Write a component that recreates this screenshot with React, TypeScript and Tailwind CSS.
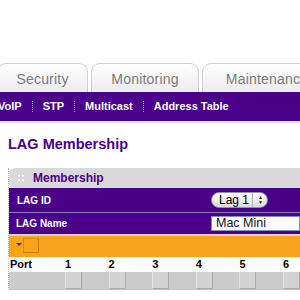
export default function App() {
  const ports = ["1", "2", "3", "4", "5", "6"];
  return (
    <div
      className="w-[300px] h-[300px] overflow-hidden bg-white"
      style={{ fontFamily: '"Liberation Sans", Arial, sans-serif' }}
    >
      {/* Tabs */}
      <div className="h-[63px]" />
      <div className="flex gap-[3px] ml-[-3px] h-[29px] items-end">
        {[
          ["Security", "w-[91px]"],
          ["Monitoring", "w-[108px]"],
          ["Maintenance", "w-[130px]"],
        ].map(([t, w]) => (
          <div
            key={t}
            className={`${w} h-[29px] shrink-0 rounded-t-[9px] border border-b-0 border-[#cfcfcf] bg-gradient-to-b from-white to-[#ececec] flex items-center justify-center text-[14px] text-[#7a7a7a] tracking-[0.2px]`}
          >
            <span className="mt-[2px]">{t}</span>
          </div>
        ))}
      </div>

      {/* Sub nav */}
      <div className="h-[29px] bg-[#4a0088] flex items-center gap-[10px] pl-[0px] text-white text-[11px] font-bold">
        <span className="ml-[-2px]">VoIP</span>
        <span className="h-[11px] border-l border-dotted border-[#9a86c4]" />
        <span>STP</span>
        <span className="h-[11px] border-l border-dotted border-[#9a86c4]" />
        <span>Multicast</span>
        <span className="h-[11px] border-l border-dotted border-[#9a86c4]" />
        <span>Address Table</span>
      </div>
      <div className="h-[2px] bg-[#e6e0ee]" />

      {/* Title */}
      <div className="pl-[8px] pt-[12px] text-[14.5px] font-bold text-[#4a0088] leading-[18px]">
        LAG Membership
      </div>

      {/* Card */}
      <div className="ml-[8px] mt-[15px] border-l border-dotted border-[#c4c4c4]">
        <div className="h-[20px] bg-[#d9d9d9] rounded-tl-[6px] flex items-center">
          <div className="grid grid-cols-2 gap-[2px] ml-[9px] mr-[9px]">
            <span className="w-[2px] h-[2px] bg-white" />
            <span className="w-[2px] h-[2px] bg-white" />
            <span className="w-[2px] h-[2px] bg-white" />
            <span className="w-[2px] h-[2px] bg-white" />
          </div>
          <span className="text-[12px] font-bold text-[#4a0088]">Membership</span>
        </div>

        {/* LAG ID */}
        <div className="h-[25px] bg-[#4a0088] border-b border-[#8c78b8] flex items-center">
          <span className="w-[202px] shrink-0 pl-[8px] text-[10px] font-bold text-white">LAG ID</span>
          <div className="h-[16px] w-[57px] shrink-0 rounded-full border border-[#8d93a6] bg-gradient-to-b from-white to-[#dcdcdc] flex items-center text-[12px] text-black">
            <span className="pl-[7px] w-[40px]">Lag 1</span>
            <span className="h-full border-l border-[#b5b5b5]" />
            <span className="flex flex-col items-center ml-[5px] leading-none text-[5px] text-[#222]">
              <span>▲</span>
              <span>▼</span>
            </span>
          </div>
        </div>

        {/* LAG Name */}
        <div className="h-[21px] bg-[#4a0088] flex items-center">
          <span className="w-[202px] shrink-0 pl-[7px] text-[10px] font-bold text-white">LAG Name</span>
          <div className="h-[15px] flex-1 bg-white border border-[#7f8fb8] flex items-center pl-[4px] text-[12.5px] text-[#111]">
            Mac Mini
          </div>
        </div>
        <div className="h-[2px] bg-[#d6cfe4]" />

        {/* Orange row */}
        <div className="h-[21px] bg-[#f6a41c] flex items-start">
          <span className="mt-[7px] ml-[7px] w-0 h-0 border-l-[3px] border-r-[3px] border-t-[3px] border-l-transparent border-r-transparent border-t-[#3a2f9a]" />
          <span className="mt-[2px] ml-[1px] w-[16px] h-[15px] border border-[#d88c12] border-r-[#c57f10] border-b-[#c57f10] bg-[#f6a41c]" />
        </div>

        {/* Port numbers */}
        <div className="h-[15px] flex items-center text-[11px] font-bold text-black">
          <span className="w-[56px] shrink-0 pl-[1px]">Port</span>
          {ports.map((p) => (
            <span key={p} className="w-[43.6px] shrink-0">
              {p}
            </span>
          ))}
        </div>

        {/* Checkbox row */}
        <div className="h-[18px] bg-[#cbcbcb] border-b border-dotted border-[#bdbdbd] flex items-stretch">
          <span className="w-[56px] shrink-0" />
          {ports.map((p) => (
            <span key={p} className="w-[43.6px] shrink-0 flex">
              <span className="w-[17px] h-[17px] bg-[#d3d3d3] border-r border-b border-[#a9a9a9] border-l border-l-[#e2e2e2]" />
            </span>
          ))}
        </div>
      </div>
    </div>
  );
}
